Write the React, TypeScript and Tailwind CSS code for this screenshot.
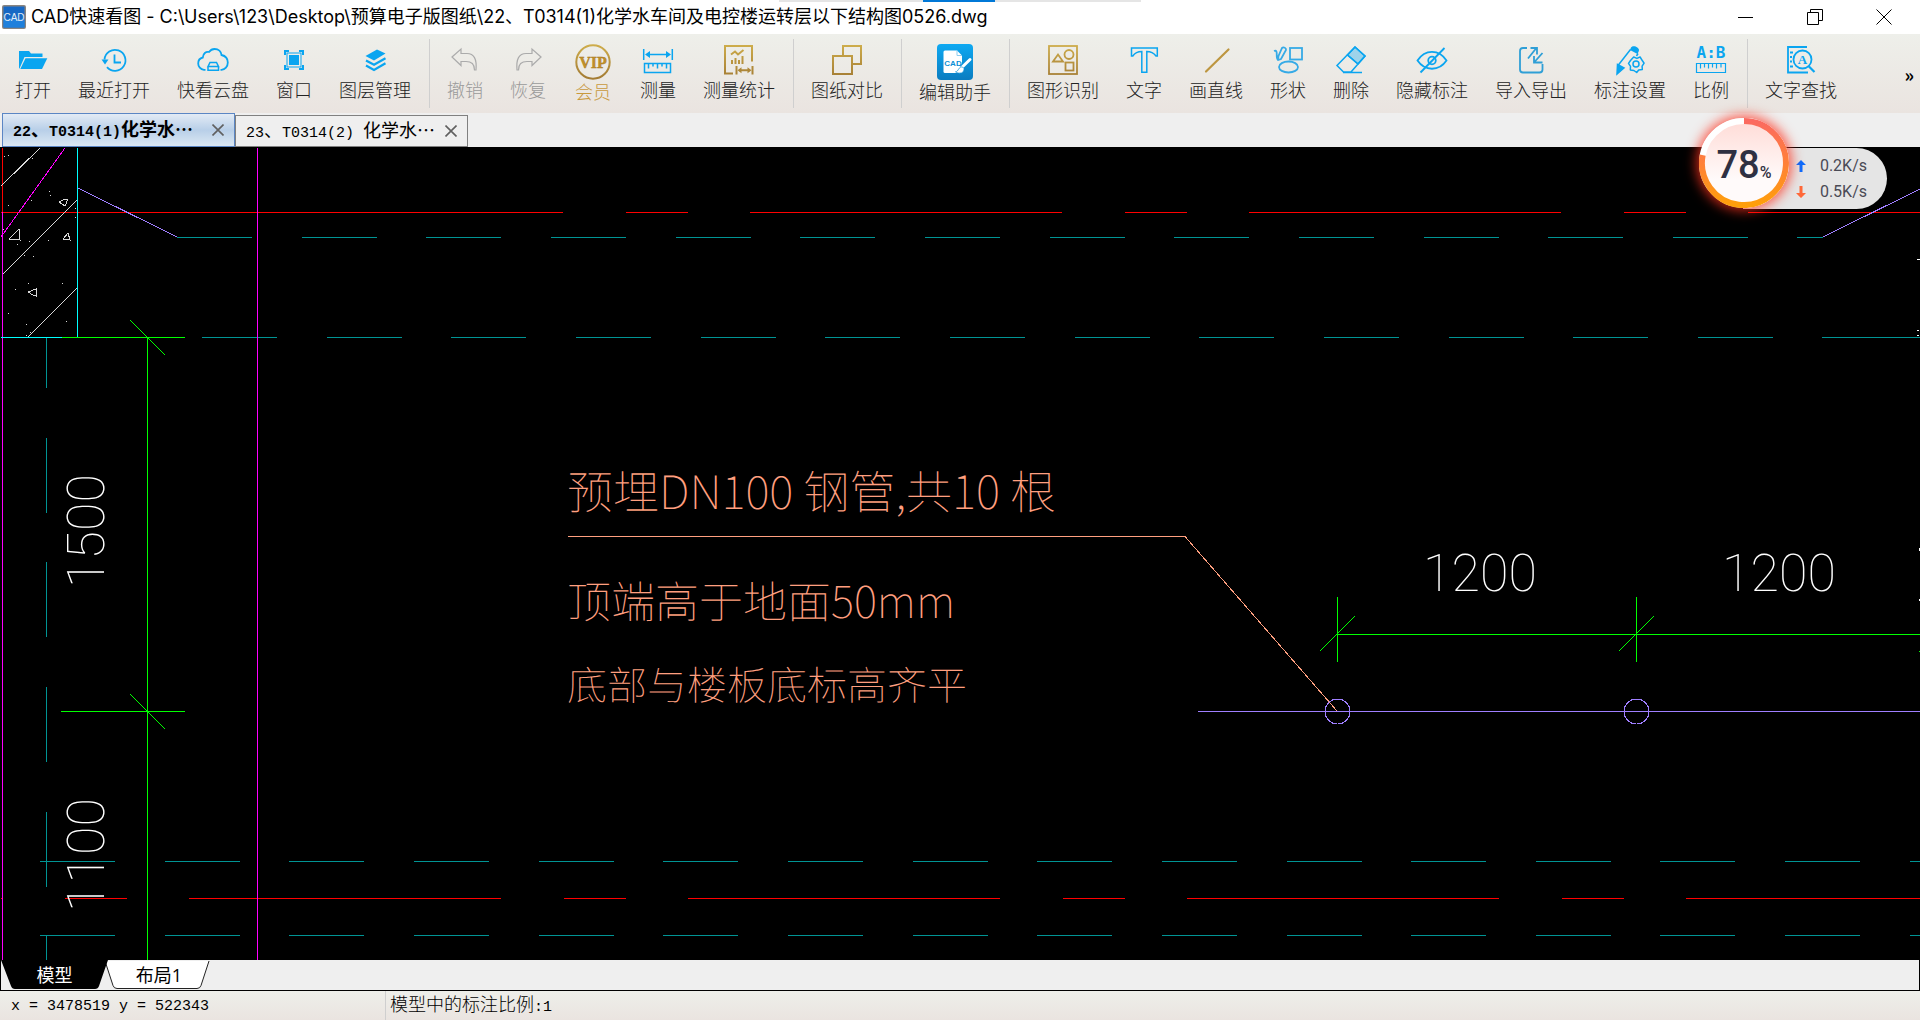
import type { ReactNode } from "react"
import clsx from "clsx"

const SKY = "#0aa5f0"
const GOLD = "url(#gold)"

type Tool = {
  label: string
  icon: ReactNode
  size?: "large"
  tone?: "disabled" | "vip"
}

function Icon({ children, large = false }: { children: ReactNode; large?: boolean }) {
  return (
    <svg
      className={large ? "h-9 w-9" : "h-8 w-8"}
      viewBox={large ? "0 0 36 36" : "0 0 32 32"}
      fill="none"
      stroke={SKY}
      strokeWidth="1.5"
      aria-hidden="true"
    >
      {children}
    </svg>
  )
}

const undoPath = "M3 13 12 5v4.500h6C25 9.500 28 15 27 26h-1.500C25.500 20 22.500 17.500 17 17.500h-5v4z"

const toolGroups: Tool[][] = [
  [
    {
      label: "打开",
      icon: (
        <Icon>
          <g fill={SKY} stroke="none">
            <path d="M2 7h10l2 2.500h11.500V13H7.500L2.500 24.500H2z" />
            <path d="M8.500 14.200h21.800L25 25H3.300z" />
          </g>
        </Icon>
      ),
    },
    {
      label: "最近打开",
      icon: (
        <Icon>
          <path d="M6.500 15.500A10.500 10.500 0 1 1 9 23.200" strokeWidth="1.800" />
          <path d="M3.500 15.500h7L7 20.500z" fill={SKY} stroke="none" />
          <path d="M16.500 10.500v8H23" strokeWidth="1.800" />
        </Icon>
      ),
    },
    {
      label: "快看云盘",
      icon: (
        <Icon>
          <path
            d="M8.500 25.800H7C3.500 25.500 1.200 22.500 1.200 19.500c0-3.200 2-5.400 4.600-6C6 9.500 9 7.200 12 8c1.500-2 3.300-3 5.500-3 4 0 6.700 2.500 7 6 3.500.8 6.300 3.500 6.300 7.500 0 4-2.800 7-6.300 7.300h-1"
            strokeWidth="1.800"
          />
          <path d="M11 22.500 13 18.500h6.500l2 4zM11 22.500v3.800h10.500v-3.800" />
        </Icon>
      ),
    },
    {
      label: "窗口",
      icon: (
        <Icon>
          <path d="M7 11V7h4M21 7h4v4M25 21v4h-4M11 25H7v-4" strokeWidth="2" />
          <rect x="9" y="9" width="14" height="14" strokeWidth="1" />
          <rect x="11" y="11" width="10" height="10" fill={SKY} stroke="none" />
        </Icon>
      ),
    },
    {
      label: "图层管理",
      icon: (
        <Icon>
          <path d="M18 5.500 26.500 9.500 15 16.500 6.500 12z" fill={SKY} stroke="none" />
          <path d="M7 16.500l8 4.300 11.500-6.500M7 21.500l8 4.500 11.500-6.700" strokeWidth="2.200" />
        </Icon>
      ),
    },
  ],
  [
    {
      label: "撤销",
      tone: "disabled",
      icon: (
        <Icon>
          <path d={undoPath} stroke="#ababab" strokeWidth="1.200" />
        </Icon>
      ),
    },
    {
      label: "恢复",
      tone: "disabled",
      icon: (
        <Icon>
          <path d={undoPath} transform="matrix(-1 0 0 1 32 0)" stroke="#ababab" strokeWidth="1.200" />
        </Icon>
      ),
    },
    {
      label: "会员",
      size: "large",
      tone: "vip",
      icon: (
        <Icon large>
          <circle cx="18" cy="18" r="16.700" stroke={GOLD} strokeWidth="2" />
          <text
            x="18"
            y="23.500"
            textAnchor="middle"
            className="font-['Liberation_Serif',serif] text-[16px] font-bold"
            fill="#c1922a"
            stroke="#a8761a"
            strokeWidth="0.400"
          >
            VIP
          </text>
        </Icon>
      ),
    },
    {
      label: "测量",
      icon: (
        <Icon>
          <path d="M1.700 5v11M30.300 5v11M5 10.500h22" />
          <path d="M3 10.500 8 7v7zM29 10.500 24 7v7z" fill={SKY} stroke="none" />
          <path d="M2.500 19.500h26v9h-26zM6.500 19.500v5M11 19.500v3M15.500 19.500v5M20 19.500v3M24.500 19.500v5" />
        </Icon>
      ),
    },
    {
      label: "测量统计",
      icon: (
        <Icon>
          <g stroke={GOLD} strokeWidth="2">
            <path d="M10 29.500H2V2h27v15.500" />
            <path d="M8 10.500l4-3 3 3 5.500-4.500M9 20v-4M12.500 20v-6M16 20v-4M19.500 20v-8" />
            <path d="M13.500 22v8.500M29.500 22v8.500M16 26.300h11" />
          </g>
          <path d="M14.500 26.300l4-3v6zM28.500 26.300l-4-3v6z" fill="#ad8738" stroke="none" />
        </Icon>
      ),
    },
  ],
  [
    {
      label: "图纸对比",
      icon: (
        <Icon>
          <g stroke={GOLD} strokeWidth="2">
            <path d="M12 11V2h18v18h-8.500" />
            <rect x="2" y="12" width="19" height="18" />
          </g>
        </Icon>
      ),
    },
  ],
  [
    {
      label: "编辑助手",
      size: "large",
      icon: (
        <Icon large>
          <rect width="36" height="36" rx="4" fill="url(#assistant)" stroke="none" />
          <path d="M8 6.500h12l5 5V29H8a1.500 1.500 0 0 1-1.500-1.500V8A1.500 1.500 0 0 1 8 6.500z" fill="#fff" stroke="none" />
          <path d="M20 6.500v5h5" stroke="#8ccdf0" strokeWidth="1" />
          <text
            x="16"
            y="21.500"
            textAnchor="middle"
            className="font-['Liberation_Sans_Narrow','Liberation_Sans',sans-serif] text-[8px] font-bold"
            fill="#0b8fd6"
            stroke="none"
          >
            CAD
          </text>
          <path d="M33 15.500l-8.500 8" stroke="#0b8fd6" strokeWidth="5" />
          <path d="M33 15.500l-8 7.800" stroke="#fff" strokeWidth="3" strokeLinecap="round" />
          <path d="M25.500 23c-4-1-4 5-7 4.800 4 2.800 9 1 8.500-3.300z" fill="#fff" stroke="#0b8fd6" strokeWidth="0.700" />
        </Icon>
      ),
    },
  ],
  [
    {
      label: "图形识别",
      icon: (
        <Icon>
          <g stroke={GOLD} strokeWidth="1.800">
            <rect x="2" y="2" width="28" height="28" />
            <path d="M6 17.500 11 10.500 16 17.500z" />
            <circle cx="22" cy="10.500" r="4.500" />
            <rect x="18.500" y="18.500" width="8" height="8" />
          </g>
        </Icon>
      ),
    },
    {
      label: "文字",
      icon: (
        <Icon>
          <path d="M3.500 4h25.800v8L28 12C25 8 22 7.500 18.800 7.500v20.800h-5V7.500C10.500 7.500 7.500 8 4.800 12L3.500 12z" />
        </Icon>
      ),
    },
    {
      label: "画直线",
      icon: (
        <Icon>
          <path d="M6 27.500 28.500 5.500" stroke="#bd9640" strokeWidth="2.200" strokeLinecap="round" />
        </Icon>
      ),
    },
    {
      label: "形状",
      icon: (
        <Icon>
          <g stroke="#36aae6" strokeWidth="1.800">
            <rect x="18" y="4" width="12" height="11.500" />
            <ellipse cx="16.500" cy="23" rx="9.500" ry="5.500" />
            <path d="M2 7c5-2 1 7 4 9l3-1 5-9c.5-2-2.500-3.500-4-2L6.500 12 6 16" />
          </g>
        </Icon>
      ),
    },
    {
      label: "删除",
      icon: (
        <Icon>
          <path d="M20 3 30 12 16 28H8.500L2 21.500zM12.500 11 23 20M8 28.500h19" />
          <path d="M20 3 30 12 23 20 12.500 11z" fill={SKY} fillOpacity="0.350" />
        </Icon>
      ),
    },
    {
      label: "隐藏标注",
      icon: (
        <Icon>
          <g strokeWidth="1.800">
            <path d="M1.500 16.500C9 5 23 5 30.500 16.500 23 27.500 9 27.500 1.500 16.500z" />
            <circle cx="16" cy="16.500" r="3.800" />
            <path d="M28.500 4 4.500 28.500" />
          </g>
        </Icon>
      ),
    },
    {
      label: "导入导出",
      icon: (
        <Icon>
          <g stroke="#2f9fd6" strokeWidth="1.800">
            <path d="M12 4H8a3 3 0 0 0-3 3v18.500a3 3 0 0 0 3 3h16.500a3 3 0 0 0 3-3V20" />
            <path d="M13 14.500 21 4.500M15.500 4H22v6.500M27.500 9 19 18.500M19 12v6.500h8.500" />
          </g>
        </Icon>
      ),
    },
    {
      label: "标注设置",
      icon: (
        <Icon>
          <path d="M17 3.500c2-3 8-.5 8 2.500 0 1.500-1 2.500-1.500 4L16 6z" fill={SKY} stroke="none" />
          <path d="M16.500 5.500 4 21.500M24 9.500l-1.500 2.500" />
          <path d="M3.500 20.500 10 24l-7 6z" fill={SKY} />
          <path
            d="M19.700 13l3.200 1.400 3.200-1.400 2 3.300 2 2.900-2 3 .2 3.300-3.600.6-2 2.400-2.800-2-3.600-.6.200-3.500-2-3 2-2.900z"
            strokeLinejoin="round"
          />
          <circle cx="22" cy="20" r="3" />
        </Icon>
      ),
    },
    {
      label: "比例",
      icon: (
        <Icon>
          <text
            x="16"
            y="14"
            textAnchor="middle"
            className="font-['DejaVu_Sans_Mono',monospace] text-[16px] font-bold"
            fill={SKY}
            stroke="none"
          >
            A:B
          </text>
          <path d="M1.500 19.500h29v9h-29zM5.500 19.500v5M9.500 19.500v4M13.500 19.500v5M17.500 19.500v4M21.500 19.500v5M26 19.500v4" strokeWidth="1.200" />
        </Icon>
      ),
    },
  ],
  [
    {
      label: "文字查找",
      icon: (
        <Icon>
          <path d="M22 3H3v25.500h20M5 8.500h3M5 13h2M5 17.500h2M5 22.500h3" strokeWidth="1.800" />
          <circle cx="17.500" cy="15.500" r="9" strokeWidth="1.800" />
          <path d="M23.500 22l6 6" strokeWidth="2.200" />
          <text
            x="17.500"
            y="20"
            textAnchor="middle"
            className="font-['Liberation_Serif',serif] text-[13px] font-bold"
            fill={SKY}
            stroke="none"
          >
            A
          </text>
        </Icon>
      ),
    },
  ],
]

const files = [
  { number: "22", code: "T0314(1)", name: "化学水…", active: true },
  { number: "23", code: "T0314(2) ", name: "化学水…", active: false },
]

function SharedGradients() {
  return (
    <svg className="absolute h-0 w-0" aria-hidden="true">
      <defs>
        <linearGradient id="gold" gradientUnits="userSpaceOnUse" x1="0" y1="0" x2="0" y2="34">
          <stop offset="0" stopColor="#cfae4c" />
          <stop offset="1" stopColor="#a47c34" />
        </linearGradient>
        <linearGradient id="assistant" x1="0" y1="0" x2="0" y2="1">
          <stop offset="0" stopColor="#0ea9f2" />
          <stop offset="1" stopColor="#0a7cc0" />
        </linearGradient>
      </defs>
    </svg>
  )
}

function TitleBar() {
  return (
    <header className="relative flex h-[34px] shrink-0 items-center bg-white">
      <div className="absolute top-0 left-[779px] flex h-0.5 w-[362px] bg-[#e5e5e5]">
        <div className="ml-36 w-[72px] bg-[#0078d7]" />
      </div>
      <svg className="ml-0.5 h-6 w-6" viewBox="0 0 24 24" aria-hidden="true">
        <rect width="24" height="24" rx="2" fill="#8a8580" />
        <rect x="1.500" y="1.500" width="21" height="21" fill="#1768c4" />
        <rect x="1.500" y="14" width="21" height="8.500" fill="#1f80dc" />
        <text
          x="12"
          y="16"
          textAnchor="middle"
          className="font-['Liberation_Sans_Narrow','Liberation_Sans',sans-serif] text-[10px]"
          fill="#e3ecf5"
        >
          CAD
        </text>
      </svg>
      <h1 className="ml-[5px] flex-1 truncate font-['Inter','Noto_Sans_CJK_SC',sans-serif] text-[18px] leading-6 font-normal text-black">
        CAD快速看图 - C:\Users\123\Desktop\预算电子版图纸\22、T0314(1)化学水车间及电控楼运转层以下结构图0526.dwg
      </h1>
      <div className="mr-[2px] flex">
        <button className="flex h-8 w-[69px] items-center justify-center" aria-label="最小化">
          <svg className="h-4 w-4" viewBox="0 0 16 16" stroke="#000">
            <path d="M0 8.500h15" />
          </svg>
        </button>
        <button className="flex h-8 w-[69px] items-center justify-center" aria-label="还原">
          <svg className="h-4 w-4" viewBox="0 0 16 16" stroke="#000" fill="none">
            <path d="M.5 3.500h11v12H.5zM3.500 3.500v-3h12v11h-4" />
          </svg>
        </button>
        <button className="flex h-8 w-[69px] items-center justify-center" aria-label="关闭">
          <svg className="h-4 w-4" viewBox="0 0 16 16" stroke="#000">
            <path d="M.5.500l15 15M15.500.500l-15 15" />
          </svg>
        </button>
      </div>
    </header>
  )
}

function ToolButton({ tool }: { tool: Tool }) {
  return (
    <button
      className={clsx("flex flex-col items-center pt-2.5", tool.tone === "vip" && "w-10")}
      disabled={tool.tone === "disabled"}
    >
      {tool.icon}
      <span
        className={clsx(
          "text-[18px] leading-5 font-light whitespace-nowrap",
          tool.size === "large" ? "mt-px" : "mt-[3px]",
          tool.tone === "disabled" && "text-[#9a9a9a]",
          tool.tone === "vip" && "text-[#c8983c]",
          !tool.tone && "text-[#222]",
        )}
      >
        {tool.label}
      </span>
    </button>
  )
}

function Toolbar() {
  return (
    <nav
      className="flex h-[79px] shrink-0 overflow-hidden bg-linear-to-b from-[#eeefea] to-[#eae4e0] pl-[15px] font-['Noto_Sans_CJK_SC',sans-serif]"
      aria-label="工具栏"
    >
      {toolGroups.map((group, index) => (
        <div key={group[0].label} className="flex items-start">
          {index > 0 && <div className="mt-[5px] mr-[17px] ml-[18px] h-[69px] w-px bg-[#cfcfcf]" />}
          <div className="flex items-start gap-[27px]">
            {group.map((tool) => (
              <ToolButton key={tool.label} tool={tool} />
            ))}
          </div>
        </div>
      ))}
      <button className="mr-1.5 ml-auto self-center text-[18px] leading-none font-bold text-black" aria-label="更多工具">
        »
      </button>
    </nav>
  )
}

function FileTabs() {
  return (
    <div className="flex h-[34px] shrink-0 items-end bg-[#efefef] pl-0.5 font-['Liberation_Mono','Noto_Sans_CJK_SC',monospace]">
      {files.map((file) => (
        <div
          key={file.number}
          className={clsx(
            "flex w-[233px] items-center justify-between border pr-2.5 pl-2.5 text-black",
            file.active
              ? "h-[34px] border-[#5b86c4] bg-linear-to-b from-[#e3ebf5] via-[#b8cfe8] to-[#dce8f3] font-bold"
              : "h-8 border-[#808080] bg-[#efefef]",
          )}
        >
          <button className="flex items-baseline text-[15px] leading-6 whitespace-pre">
            <span>{file.number}</span>
            <span className="font-['Noto_Sans_CJK_SC',sans-serif] text-[18px]">、</span>
            <span>{file.code}</span>
            <span className="font-['Noto_Sans_CJK_SC',sans-serif] text-[18px]">{file.name}</span>
          </button>
          <button aria-label="关闭标签">
            <svg className="h-3 w-3" viewBox="0 0 12 12" stroke="#606060" strokeWidth="1.600">
              <path d="M.5.500l11 11M11.500.500l-11 11" />
            </svg>
          </button>
        </div>
      ))}
    </div>
  )
}

const specks = [
  [4, 9], [8, 8], [32, 11], [49, 44], [50, 48], [8, 58], [31, 53], [75, 61], [75, 70], [3, 82],
  [29, 94], [17, 97], [48, 93], [24, 108], [33, 109], [28, 136], [15, 142], [62, 136], [8, 166],
  [26, 177], [66, 174], [30, 185], [26, 188],
]

const HATCH = "75 49.65"

function Drawing() {
  return (
    <main className="min-h-0 flex-1 bg-black">
      <svg
        className="block h-full w-full"
        viewBox="0 0 1920 813"
        preserveAspectRatio="xMinYMin slice"
        fill="none"
        shapeRendering="crispEdges"
        role="img"
        aria-label="结构图"
      >
        {/* hidden edges */}
        <g stroke="#009494">
          <path d="M177 90.500H1823" strokeDasharray={HATCH} />
          <path d="M202 190.500H1823" strokeDasharray={HATCH} />
          <path d="M1823 190.500H1920" />
          <path d="M40 714.500H1920" strokeDasharray={HATCH} />
          <path d="M40 788.500H1920" strokeDasharray={HATCH} />
          <path d="M46.500 191V813" strokeDasharray={HATCH} strokeDashoffset="25" />
        </g>

        {/* centre lines */}
        <g stroke="#ff0000">
          <path d="M1 65.500H563" />
          <path d="M626 65.500H1920" strokeDasharray="62 62 312 63" />
          <path d="M65 751.500H1920" strokeDasharray="62 62 312 63" />
          <path d="M2.500 1V65M1 751.500h1" />
        </g>

        <g stroke="#ff00ff">
          <path d="M2.500 65V813M257.500 1V813M65 1 1 90" />
        </g>

        {/* concrete column */}
        <g stroke="#d8d8d8">
          <path d="M40 1 1 39M77 53 3 127M77 141 28 190" />
          <path d="M59 55l6-3 3 0-3 7zM9 92l10-10 1 11zM63 92l5-6 2 7zM28 145l8-3 0 7-3-1z" />
        </g>
        {specks.map(([x, y]) => (
          <rect key={`${x}-${y}`} x={x} y={y} width="1" height="1" fill="#d8d8d8" />
        ))}
        <path d="M77.500 1V190M1 190.500H62" stroke="#00ffff" />

        <g stroke="#9f7fff">
          <path d="M78 41l99 49M1823 90l97-48M1198 564.500H1920" />
          <circle cx="1337.500" cy="564.500" r="12.500" />
          <circle cx="1636.500" cy="564.500" r="12.500" />
        </g>

        {/* dimension lines */}
        <g stroke="#00ff00">
          <path d="M62 190.500H185M147.500 190V813M130 173l35 35" />
          <path d="M61 564.500H185M130 547l35 35" />
          <path d="M1337 487.500H1920M1337.500 450v65M1320 504l35-35" />
          <path d="M1636.500 450v65M1619 504l35-35M1919 504h1" />
        </g>
        <path d="M1919.500 401v3M1919.500 452v2M1917 113l3-1M1917 183.500h2M1917 188l2 1" stroke="#fff" />

        <path d="M568 389.500H1185L1337 564" stroke="#ff9f7f" />

        <g
          className="font-['Noto_Sans_CJK_SC',sans-serif] font-thin"
          fill="#ff9f7f"
          textRendering="geometricPrecision"
        >
          <text x="567" y="362" className="text-[46px]">预埋DN100 钢管,共10 根</text>
          <text x="567" y="471" className="text-[44px]">顶端高于地面50mm</text>
          <text x="567" y="553" className="text-[40px]">底部与楼板底标高齐平</text>
        </g>

        <g className="font-['Roboto',sans-serif] text-[52px] font-thin" fill="#fff" textAnchor="middle">
          <text x="1480" y="444">1200</text>
          <text x="1779" y="444">1200</text>
          <text transform="translate(104 384) rotate(-90)">1500</text>
          <text transform="translate(104 708) rotate(-90)">1100</text>
        </g>
      </svg>
    </main>
  )
}

function SpeedWidget() {
  const percent = 78
  return (
    <aside className="absolute top-[118px] right-[33px] flex h-[91px] w-[188px] items-end font-['Roboto','Liberation_Sans',sans-serif]">
      <div className="ml-11 flex h-[61px] flex-1 flex-col justify-center gap-1.5 rounded-r-full bg-[#e5e5e5] pr-5 pl-[53px] text-[16px] leading-5 text-[#4a4a55]">
        <div className="flex items-center justify-between">
          <svg className="h-3 w-2.5" viewBox="0 0 10 12" aria-label="上传">
            <path d="M5 0l5 5H6.500v7h-3V5H0z" fill="#0a6cff" />
          </svg>
          <span>0.2K/s</span>
        </div>
        <div className="flex items-center justify-between">
          <svg className="h-3 w-2.5" viewBox="0 0 10 12" aria-label="下载">
            <path d="M5 12l5-5H6.500V0h-3v7H0z" fill="#ff6838" />
          </svg>
          <span>0.5K/s</span>
        </div>
      </div>
      <div className="absolute top-0 left-0 flex h-[90px] w-[90px] items-center justify-center rounded-full shadow-[0_0_12px_3px_rgba(255,50,30,0.75)]">
        <svg className="absolute inset-0 h-full w-full" viewBox="0 0 90 90" fill="none" aria-hidden="true">
          <defs>
            <linearGradient id="ring" x1="0" y1="0" x2="0" y2="1">
              <stop offset="0" stopColor="#fb6a60" />
              <stop offset="0.500" stopColor="#ff8038" />
              <stop offset="1" stopColor="#ff9f0a" />
            </linearGradient>
            <linearGradient id="face" x1="0" y1="0" x2="0" y2="1">
              <stop offset="0" stopColor="#ffdcd7" />
              <stop offset="0.700" stopColor="#fffafa" />
            </linearGradient>
          </defs>
          <circle cx="45" cy="45" r="42" fill="url(#face)" stroke="#fff" strokeWidth="6" />
          <path d="M45 3A42 42 0 1 1 3.700 37.100" stroke="url(#ring)" strokeWidth="6" />
        </svg>
        <div className="relative flex items-baseline pt-1 font-medium text-[#2f3042]">
          <span className="text-[38px] leading-none">{percent}</span>
          <span className="text-[16px] leading-none">%</span>
        </div>
      </div>
    </aside>
  )
}

function LayoutTabs() {
  return (
    <div className="flex h-[31px] shrink-0 items-start border-x border-b border-black bg-[#efefef] font-['Open_Sans','Noto_Sans_CJK_SC',sans-serif] text-[18px]">
      <button className="relative z-10 h-[29px] w-[107px] pt-0.5 text-white">
        <svg className="absolute inset-0 h-full w-full" viewBox="0 0 107 29" aria-hidden="true">
          <path d="M0 0h107L98 26q-1 3-4 3H14q-3 0-4-3z" fill="#000" />
        </svg>
        <span className="relative">模型</span>
      </button>
      <button className="relative -ml-1 h-[29px] w-[106px] pt-0.5 pl-1 text-black">
        <svg className="absolute inset-0 h-full w-full" viewBox="0 0 106 29" aria-hidden="true">
          <path d="M1 1h104L97 25.500q-1 3-4 3H13q-3 0-4-3z" fill="#fff" />
          <path d="M1 1l8 24.500q1 3 4 3h80q3 0 4-3L105 1" fill="none" stroke="#222" />
        </svg>
        <span className="relative">布局1</span>
      </button>
    </div>
  )
}

function StatusBar() {
  return (
    <footer className="flex h-[29px] shrink-0 items-center bg-linear-to-b from-[#eeefea] to-[#eae4e0] pl-[11px] font-['Liberation_Mono',monospace] text-[15px] text-black">
      <span className="w-[374px] pt-1">x = 3478519 y = 522343</span>
      <div className="flex items-baseline border-l border-[#cfcfcf] pl-1 leading-6">
        <span className="font-['Noto_Sans_CJK_SC',sans-serif] text-[18px] font-light">模型中的标注比例</span>
        <span>:1</span>
      </div>
    </footer>
  )
}

export default function App() {
  return (
    <div className="relative flex h-screen flex-col overflow-hidden">
      <SharedGradients />
      <TitleBar />
      <Toolbar />
      <FileTabs />
      <Drawing />
      <LayoutTabs />
      <StatusBar />
      <SpeedWidget />
    </div>
  )
}
